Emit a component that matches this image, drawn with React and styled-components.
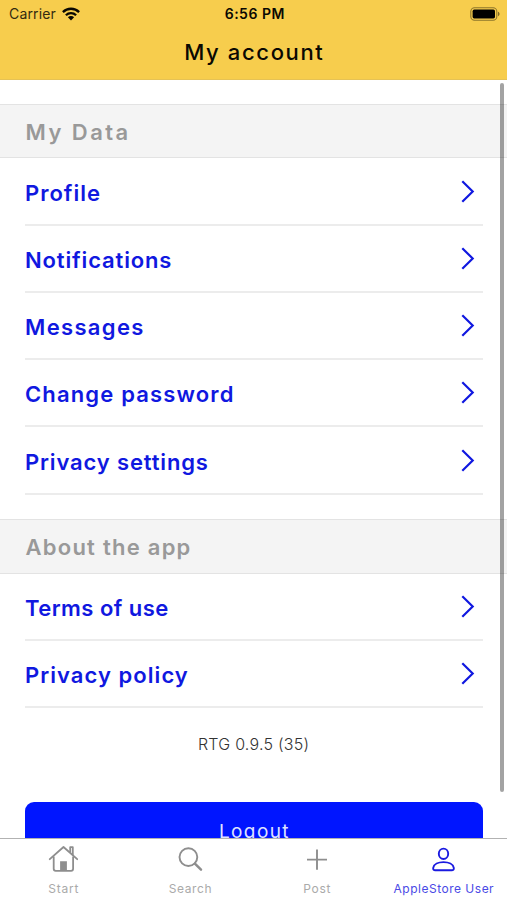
import React from "react";
import styled, { createGlobalStyle } from "styled-components";

const App = () => {
  return (
    <Screen>
      <GlobalStyle />
      <Header>
        <StatusBar>
          <Carrier>
            <Label $tracking={0.15}>Carrier</Label>
            <WifiIcon />
          </Carrier>
          <Clock $tracking={0.5}>6:56 PM</Clock>
          <BatteryIcon />
        </StatusBar>
        <Title $tracking={1.65}>My account</Title>
      </Header>

      <Content>
        {sections.map((section) => (
          <Section key={section.title}>
            <SectionHeading>
              <Label $tracking={section.tracking}>{section.title}</Label>
            </SectionHeading>
            <List>
              {section.items.map((item) => (
                <Row key={item.name}>
                  <Label $tracking={item.tracking}>{item.name}</Label>
                  <ChevronIcon />
                </Row>
              ))}
            </List>
          </Section>
        ))}
        <Version $tracking={0.25}>RTG 0.9.5 (35)</Version>
        <LogoutButton>
          <Label $tracking={1.4}>Logout</Label>
        </LogoutButton>
        <ScrollThumb />
      </Content>

      <TabBar>
        {tabs.map(({ name, tracking, Icon, active }) => (
          <Tab key={name} $active={active}>
            <Icon />
            <Label $tracking={tracking}>{name}</Label>
          </Tab>
        ))}
      </TabBar>
    </Screen>
  );
};

//
//Icons
//
const WifiIcon = () => (
  <svg width="18" height="14" viewBox="0 0 18 14">
    <g fill="none" stroke="#0a0802" strokeWidth="2.3">
      <path d="M0.9 5.1a11.5 11.5 0 0 1 16.2 0" />
      <path d="M3.9 8.2a7.2 7.2 0 0 1 10.2 0" />
    </g>
    <path fill="#0a0802" d="M9 13.4 5.9 10.3a4.4 4.4 0 0 1 6.2 0z" />
  </svg>
);

const BatteryIcon = () => (
  <svg width="30" height="14" viewBox="0 0 30 14">
    <rect
      x="0.8"
      y="0.8"
      width="26"
      height="12.4"
      rx="3.8"
      fill="none"
      stroke="#0a0802"
      strokeOpacity="0.45"
      strokeWidth="1.1"
    />
    <rect x="2.6" y="2.6" width="22.4" height="8.8" rx="1.6" fill="#000" />
    <path fill="#0a0802" fillOpacity="0.5" d="M28 4.8c2 .7 2 3.700 0 4.400z" />
  </svg>
);

const ChevronIcon = () => (
  <svg width="14" height="23" viewBox="0 0 14 23">
    <path
      d="M1.300 1.200 11.700 11.500 1.300 21.800"
      fill="none"
      stroke="#1018e0"
      strokeWidth="2.2"
    />
  </svg>
);

const HomeIcon = () => (
  <svg width="30" height="28" viewBox="0 0 30 28">
    <g fill="none" stroke="#8e8e8e" strokeWidth="1.8" strokeLinejoin="round">
      <path d="M1.800 14.200 15.500 2l13.700 12.200" strokeLinecap="round" />
      <path d="M5.700 11.500v12.300a2 2 0 0 0 2 2h15.400a2 2 0 0 0 2-2V11.500" />
      <path d="M22.200 7.700V2.200h2.600v8" />
    </g>
    <path fill="#8e8e8e" d="M12.100 16.300h6.800v9.500h-6.800z" />
  </svg>
);

const SearchIcon = () => (
  <svg width="30" height="28" viewBox="0 0 30 28">
    <g fill="none" stroke="#8e8e8e" strokeLinecap="round">
      <circle cx="13.400" cy="12.100" r="8.900" strokeWidth="1.9" />
      <path d="m19.900 18.600 6.100 6" strokeWidth="2.5" />
    </g>
  </svg>
);

const PlusIcon = () => (
  <svg width="30" height="28" viewBox="0 0 30 28">
    <path
      d="M15 4.400v20.400M5 14.600h20"
      fill="none"
      stroke="#8e8e8e"
      strokeWidth="1.9"
    />
  </svg>
);

const UserIcon = () => (
  <svg width="30" height="28" viewBox="0 0 30 28">
    <g fill="none" stroke="#1a1ae0" strokeWidth="1.9" strokeLinejoin="round">
      <ellipse cx="14.500" cy="8.800" rx="4.700" ry="5.200" />
      <path d="M6.300 25.200h16.400c1.700 0 2.300-.7 2.100-2.300-.6-3.700-5.100-5.800-10.300-5.800s-9.700 2.100-10.300 5.800c-.2 1.600.4 2.300 2.100 2.300z" />
    </g>
  </svg>
);

//
//Data
//
const sections = [
  {
    title: "My Data",
    tracking: 2.45,
    items: [
      { name: "Profile", tracking: 1 },
      { name: "Notifications", tracking: 0.85 },
      { name: "Messages", tracking: 1.35 },
      { name: "Change password", tracking: 1.15 },
      { name: "Privacy settings", tracking: 0.85 },
    ],
  },
  {
    title: "About the app",
    tracking: 1.25,
    items: [
      { name: "Terms of use", tracking: 0.45 },
      { name: "Privacy policy", tracking: 1.05 },
    ],
  },
];

const tabs = [
  { name: "Start", tracking: 0.75, Icon: HomeIcon },
  { name: "Search", tracking: 0.6, Icon: SearchIcon },
  { name: "Post", tracking: 0.65, Icon: PlusIcon },
  { name: "AppleStore User", tracking: 0.5, Icon: UserIcon, active: true },
];

//
//Page
//
const GlobalStyle = createGlobalStyle`
  * {
    box-sizing: border-box;
  }

  body {
    margin: 0;
    font-family: Inter, sans-serif;
    background: #fff;
  }

  svg {
    display: block;
    flex-shrink: 0;
  }
`;

const Screen = styled.div`
  display: flex;
  flex-direction: column;
  height: 100vh;
  overflow: hidden;
`;

const Label = styled.span`
  letter-spacing: ${({ $tracking }) => $tracking}px;
  margin-right: -${({ $tracking }) => $tracking}px;
  white-space: nowrap;
`;

//
//Header Area
//
const Header = styled.header`
  display: flex;
  flex-direction: column;
  align-items: center;
  flex-shrink: 0;
  height: 79.5px;
  background: #f7cd4d;
  border-bottom: 1px solid #e6c255;
`;

const StatusBar = styled.div`
  display: grid;
  grid-template-columns: 1fr auto 1fr;
  align-items: center;
  width: 100%;
  height: 27px;
  padding: 0 7px 0 9px;
  font-size: 14px;
  color: #0a0802;

  > :last-child {
    justify-self: end;
  }
`;

const Carrier = styled.div`
  display: flex;
  align-items: center;
  gap: 6px;
  color: #332a10;
`;

const Clock = styled(Label)`
  font-weight: 600;
`;

const Title = styled(Label)`
  font-size: 22px;
  font-weight: 500;
  line-height: 50px;
  color: #0a0802;
`;

//
//Settings list
//
const Content = styled.main`
  position: relative;
  display: flex;
  flex-direction: column;
  flex: 1;
  min-height: 0;
  overflow: hidden;
`;

const Section = styled.section`
  flex-shrink: 0;
  padding-top: 24.2px;
`;

const SectionHeading = styled.h2`
  display: flex;
  align-items: center;
  height: 54.8px;
  margin: 0;
  padding: 2px 25.5px 0;
  background: #f4f4f4;
  border-top: 1px solid #e3e3e3;
  border-bottom: 1px solid #e3e3e3;
  font-size: 22px;
  font-weight: 600;
  color: #999;
`;

const List = styled.div`
  padding: 0 24.5px 0 25px;
`;

const Row = styled.div`
  display: flex;
  align-items: center;
  justify-content: space-between;
  height: 67.25px;
  padding-right: 8px;
  border-bottom: 2px solid #ececec;
  font-size: 22px;
  font-weight: 600;
  color: #1018e0;

  span {
    padding-top: 3px;
  }
`;

const Version = styled(Label)`
  align-self: center;
  flex-shrink: 0;
  margin-top: 22px;
  font-size: 16px;
  font-weight: 300;
  line-height: 28px;
  color: #333;
`;

const LogoutButton = styled.button`
  flex-shrink: 0;
  height: 58px;
  margin: 44px 24.5px 0 25px;
  padding: 0;
  border: 0;
  border-radius: 9px;
  background: #0015ff;
  font-family: inherit;
  font-size: 19px;
  color: #dfe2ff;
`;

const ScrollThumb = styled.div`
  position: absolute;
  top: 3px;
  right: 3px;
  width: 4px;
  height: 709px;
  border-radius: 2px;
  background: rgba(0, 0, 0, 0.36);
`;

//
//Tab bar
//
const TabBar = styled.nav`
  display: grid;
  grid-template-columns: repeat(4, 1fr);
  flex-shrink: 0;
  height: 62px;
  border-top: 1px solid #b2b2b2;
  background: #fff;
`;

const Tab = styled.div`
  display: flex;
  flex-direction: column;
  align-items: center;
  gap: 8px;
  padding-top: 6px;
  font-size: 12px;
  line-height: 16px;
  color: ${({ $active }) => ($active ? "#4a4ae6" : "#aaa")};
`;

export default App;
